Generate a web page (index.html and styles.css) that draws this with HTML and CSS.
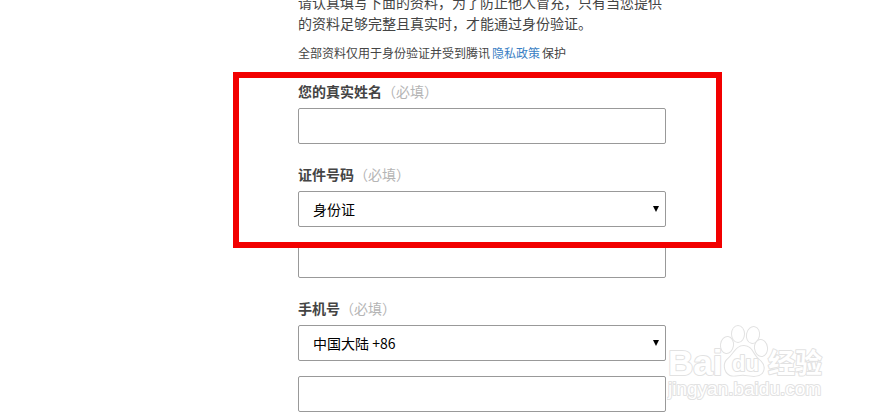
FILE: index.html
```html
<!DOCTYPE html>
<html lang="zh-CN">
<head>
<meta charset="utf-8">
<title>身份验证</title>
<link rel="stylesheet" href="styles.css">
</head>
<body>
<main class="page">
  <p class="intro">请认真填写下面的资料，为了防止他人冒充，只有当您提供的资料足够完整且真实时，才能通过身份验证。</p>
  <p class="note">全部资料仅用于身份验证并受到腾讯<a class="link" href="#">隐私政策</a>保护</p>
  <form class="form">
    <div class="marked">
      <div class="field">
        <label class="label" for="name">您的真实姓名<span class="required">（必填）</span></label>
        <input class="control" id="name" type="text">
      </div>
      <div class="field">
        <label class="label" for="id-type">证件号码<span class="required">（必填）</span></label>
        <div class="select"><select class="control" id="id-type"><option>身份证</option></select></div>
        <input class="control" type="text" aria-label="证件号码">
      </div>
      <div class="highlight"></div>
    </div>
    <div class="field">
      <label class="label" for="region">手机号<span class="required">（必填）</span></label>
      <div class="select"><select class="control" id="region"><option>中国大陆 +86</option></select></div>
      <input class="control" type="tel" aria-label="手机号">
    </div>
  </form>
</main>
<svg class="watermark" viewBox="0 0 160 80" width="160" height="80">
  <g class="outline">
    <text class="brand" x="1" y="52">Bai</text>
    <ellipse cx="60" cy="22" rx="6" ry="8" transform="rotate(8 60 22)"/>
    <ellipse cx="71" cy="11" rx="6" ry="8"/>
    <ellipse cx="86" cy="12" rx="6" ry="8" transform="rotate(12 86 12)"/>
    <ellipse cx="94" cy="25" rx="6" ry="8" transform="rotate(-8 94 25)"/>
    <path d="M77 23C69 23 67 31 61 36C56 40 57 49 63 52C68 54 72 51 78 52C85 53 91 54 95 50C99 44 95 39 91 36C86 32 85 23 77 23Z"/>
    <text class="du" x="65" y="48">du</text>
    <text class="cjk" x="101" y="50">经验</text>
    <text class="site" x="1" y="72">jingyan.baidu.com</text>
  </g>
</svg>
</body>
</html>
```
FILE: styles.css
```css
* {
  box-sizing: border-box;
}

body {
  margin: 0;
  background: #fff;
  color: #444;
  font: 14px/20px "Noto Sans CJK SC", sans-serif;
  overflow: hidden;
}

.page {
  margin: -8px 205px 0 298px;
}

p {
  margin: 0;
}

.intro {
  line-height: 21px;
}

.note {
  margin-top: 10px;
  font-size: 12px;
  line-height: 18px;
}

.link {
  margin: 0 2px;
  color: #3b7fc4;
  text-decoration: none;
}

.form {
  margin-top: 19px;
}

.marked {
  position: relative;
}

.field {
  display: flex;
  flex-direction: column;
  margin-bottom: 20px;
}

.label {
  margin-bottom: 7px;
  font-weight: 700;
}

.required {
  color: #b5b5b5;
  font-weight: 400;
}

.control {
  display: block;
  width: 100%;
  height: 36px;
  padding: 0 14px;
  border: 1px solid #999;
  border-radius: 2px;
  background: #fff;
  color: #000;
  font: inherit;
  appearance: none;
}

.select {
  position: relative;
  margin-bottom: 15px;
}

.select::after {
  content: "";
  position: absolute;
  top: 15px;
  right: 7px;
  border: 3px solid transparent;
  border-top: 6px solid #000;
  border-bottom: 0;
}

.highlight {
  position: absolute;
  top: -9px;
  right: -56px;
  bottom: 30px;
  left: -65px;
  border: 6px solid #f20000;
  pointer-events: none;
}

.watermark {
  position: absolute;
  top: 323px;
  left: 667px;
  pointer-events: none;
}

.outline {
  fill: #fff;
  stroke: #e2e2e2;
  stroke-width: 2px;
  stroke-linejoin: round;
  paint-order: stroke;
  font-family: "Liberation Sans", sans-serif;
}

.brand {
  font-size: 35px;
  font-weight: 700;
}

.du {
  font-size: 22px;
  font-weight: 700;
}

.cjk {
  font-family: "Noto Sans CJK SC", sans-serif;
  font-size: 27px;
  font-weight: 700;
}

.site {
  font-size: 19px;
}
```
